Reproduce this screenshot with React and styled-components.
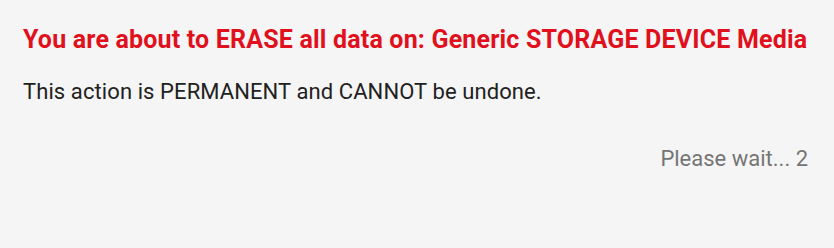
import React from 'react';
import styled, { createGlobalStyle } from 'styled-components';

const GlobalStyle = createGlobalStyle`
  html, body {
    margin: 0;
    padding: 0;
    background: #f5f5f5;
  }
`;

const Dialog = styled.div`
  font-family: Roboto, 'Noto Sans', sans-serif;
  width: 834px;
  height: 248px;
  box-sizing: border-box;
  padding: 24px 26px 0 23px;
  background: #f5f5f5;
  display: flex;
  flex-direction: column;
`;

const Title = styled.div`
  color: #e0101c;
  font-size: 25px;
  font-weight: 700;
  line-height: 32px;
  letter-spacing: 0.18px;
  white-space: nowrap;
`;

const Message = styled.div`
  color: #212121;
  font-size: 22px;
  line-height: 28px;
  letter-spacing: 0.09px;
  margin-top: 22px;
`;

const Footer = styled.div`
  display: flex;
  justify-content: flex-end;
  margin-top: 39px;
`;

const Countdown = styled.span`
  color: #757575;
  font-size: 22px;
  line-height: 28px;
`;

export default function App() {
  return (
    <>
      <GlobalStyle />
      <Dialog>
        <Title>You are about to ERASE all data on: Generic STORAGE DEVICE Media</Title>
        <Message>This action is PERMANENT and CANNOT be undone.</Message>
        <Footer>
          <Countdown>Please wait... 2</Countdown>
        </Footer>
      </Dialog>
    </>
  );
}
